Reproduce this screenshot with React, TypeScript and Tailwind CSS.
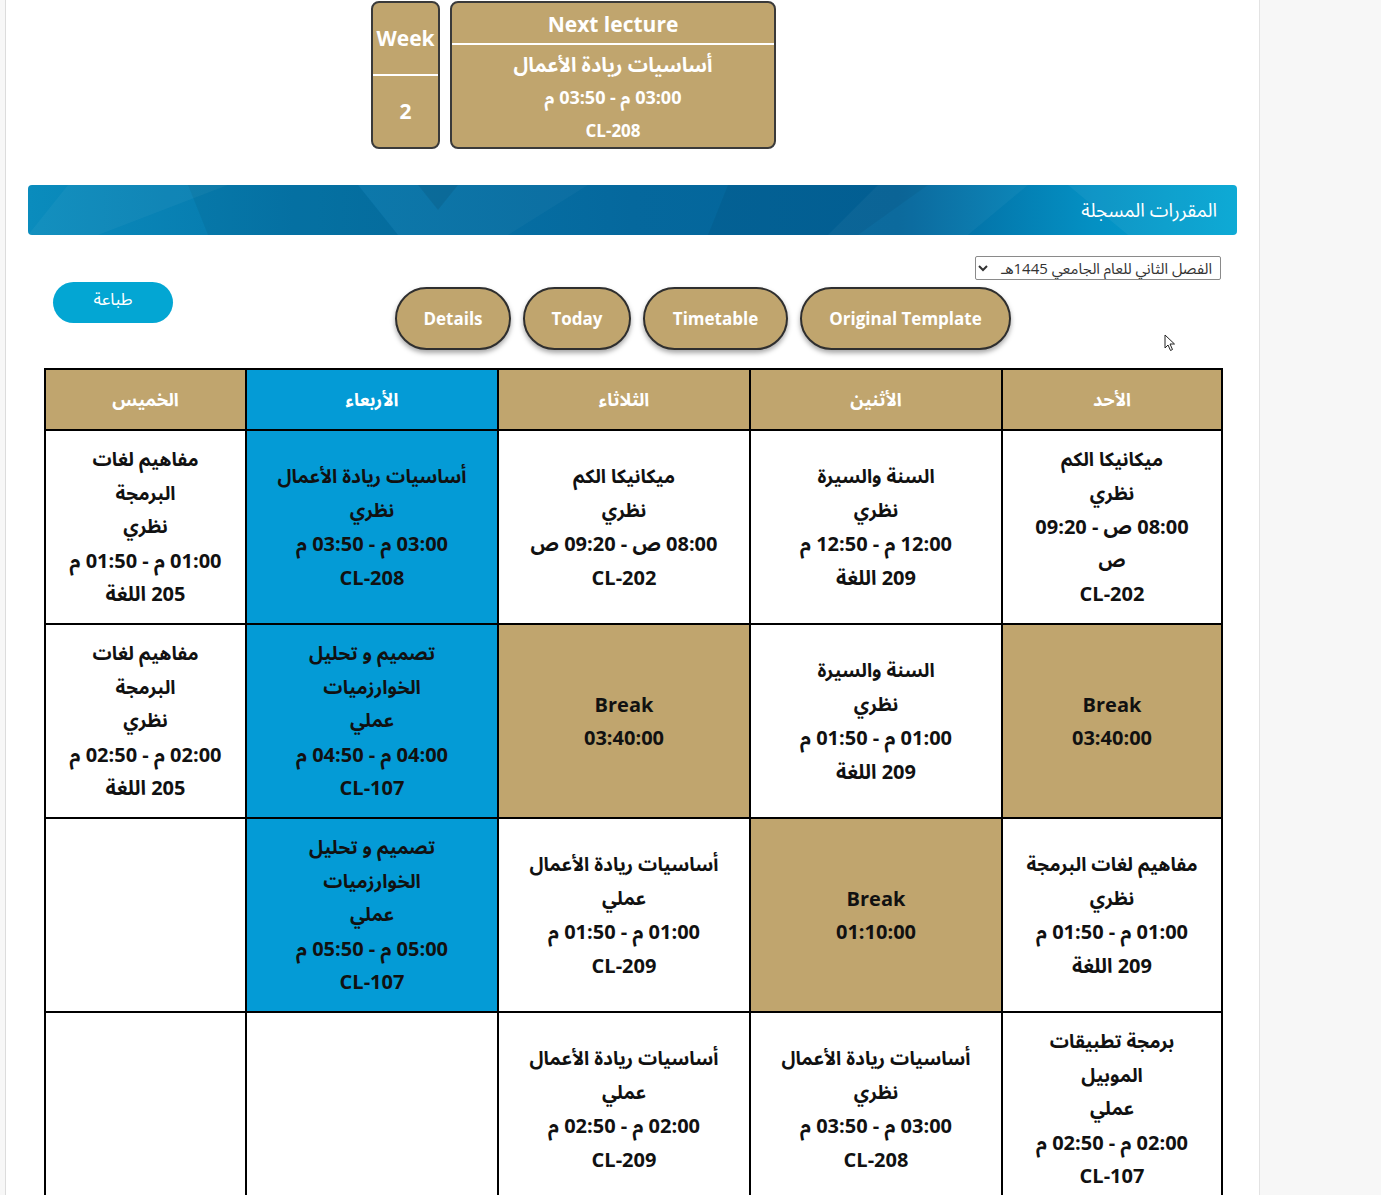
import React from "react";

type Cell =
  | { kind: "course"; lines: string[]; blue?: boolean }
  | { kind: "break"; time: string }
  | { kind: "empty"; blue?: boolean };

const FONT = {
  fontFamily:
    '"Open Sans", "Noto Sans", "Noto Sans Arabic", "Noto Naskh Arabic", "DejaVu Sans", sans-serif',
};

// Columns in RTL order: Sun, Mon, Tue, Wed, Thu
const days = ["الأحد", "الأثنين", "الثلاثاء", "الأربعاء", "الخميس"];
const widths = [220, 252, 252, 252, 201];

const rows: Cell[][] = [
  [
    { kind: "course", lines: ["ميكانيكا الكم", "نظري", "08:00 ص - 09:20", "ص", "CL-202"] },
    { kind: "course", lines: ["السنة والسيرة", "نظري", "12:00 م - 12:50 م", "209 اللغة"] },
    { kind: "course", lines: ["ميكانيكا الكم", "نظري", "08:00 ص - 09:20 ص", "CL-202"] },
    { kind: "course", lines: ["أساسيات ريادة الأعمال", "نظري", "03:00 م - 03:50 م", "CL-208"], blue: true },
    { kind: "course", lines: ["مفاهيم لغات", "البرمجة", "نظري", "01:00 م - 01:50 م", "205 اللغة"] },
  ],
  [
    { kind: "break", time: "03:40:00" },
    { kind: "course", lines: ["السنة والسيرة", "نظري", "01:00 م - 01:50 م", "209 اللغة"] },
    { kind: "break", time: "03:40:00" },
    { kind: "course", lines: ["تصميم و تحليل", "الخوارزميات", "عملي", "04:00 م - 04:50 م", "CL-107"], blue: true },
    { kind: "course", lines: ["مفاهيم لغات", "البرمجة", "نظري", "02:00 م - 02:50 م", "205 اللغة"] },
  ],
  [
    { kind: "course", lines: ["مفاهيم لغات البرمجة", "نظري", "01:00 م - 01:50 م", "209 اللغة"] },
    { kind: "break", time: "01:10:00" },
    { kind: "course", lines: ["أساسيات ريادة الأعمال", "عملي", "01:00 م - 01:50 م", "CL-209"] },
    { kind: "course", lines: ["تصميم و تحليل", "الخوارزميات", "عملي", "05:00 م - 05:50 م", "CL-107"], blue: true },
    { kind: "empty" },
  ],
  [
    { kind: "course", lines: ["برمجة تطبيقات", "الموبيل", "عملي", "02:00 م - 02:50 م", "CL-107"] },
    { kind: "course", lines: ["أساسيات ريادة الأعمال", "نظري", "03:00 م - 03:50 م", "CL-208"] },
    { kind: "course", lines: ["أساسيات ريادة الأعمال", "عملي", "02:00 م - 02:50 م", "CL-209"] },
    { kind: "empty" },
    { kind: "empty" },
  ],
];

const isArabicOnly = (s: string) => !/[0-9A-Za-z]/.test(s);

function TableCell({ cell }: { cell: Cell }) {
  if (cell.kind === "break") {
    return (
      <td className="border-2 border-black bg-[#c0a56e] text-center align-middle">
        <div className="text-[20px] font-bold leading-[33.5px] text-[#111]" dir="ltr">
          <div>Break</div>
          <div>{cell.time}</div>
        </div>
      </td>
    );
  }
  if (cell.kind === "empty") {
    return <td className={"border-2 border-black " + (cell.blue ? "bg-[#049bd6]" : "bg-white")}></td>;
  }
  return (
    <td className={"border-2 border-black text-center align-middle " + (cell.blue ? "bg-[#049bd6]" : "bg-white")}>
      <div className="text-[20px] font-bold leading-[33.5px] text-[#111]">
        {cell.lines.map((l, i) => (
          <div key={i} className={"whitespace-nowrap " + (isArabicOnly(l) ? "text-[19px]" : "")}>
            {l}
          </div>
        ))}
      </div>
    </td>
  );
}

function Banner() {
  return (
    <div className="relative ml-[22px] mt-[36px] h-[50px] w-[1209px] overflow-hidden rounded-[4px] bg-[linear-gradient(90deg,#0a8cbd_0%,#0677ab_22%,#05689d_50%,#03649a_72%,#0490c3_88%,#02a6d3_100%)]">
      <svg className="absolute inset-0 h-full w-full" viewBox="0 0 1209 50" preserveAspectRatio="none">
        <polygon points="40,0 200,0 70,50 0,50" fill="#ffffff" opacity="0.04" />
        <polygon points="160,0 330,0 370,50 180,50" fill="#000000" opacity="0.05" />
        <polygon points="330,0 560,0 480,50 370,50" fill="#ffffff" opacity="0.03" />
        <polygon points="700,0 900,0 830,50 680,50" fill="#000000" opacity="0.05" />
        <polygon points="850,0 1000,0 940,50 800,50" fill="#ffffff" opacity="0.04" />
        <polygon points="1040,0 1209,0 1209,50 1100,50" fill="#ffffff" opacity="0.05" />
        <polygon points="390,0 430,0 410,25" fill="#000000" opacity="0.08" />
      </svg>
      <div className="relative flex h-full items-center justify-start pr-[20px] text-[19px] text-white" dir="rtl">
        المقررات المسجلة
      </div>
    </div>
  );
}

export default function App() {
  return (
    <div className="flex min-h-[1195px] w-[1381px] bg-white" style={FONT}>
      <div className="w-[6px] shrink-0 border-r border-[#dcdcdc] bg-[#f7f7f7]"></div>
      <div className="relative w-[1253px] shrink-0 overflow-hidden">
        {/* Top cards */}
        <div className="ml-[365px] mt-px flex gap-[10px]">
          <div className="flex h-[148px] w-[69px] flex-col overflow-hidden rounded-[8px] border-2 border-[#3a3a3a] bg-[#c0a56e] text-white">
            <div className="flex h-[73px] items-center justify-center border-b-2 border-white text-[21px] font-bold">Week</div>
            <div className="flex flex-1 items-center justify-center text-[21px] font-bold">2</div>
          </div>
          <div className="flex h-[148px] w-[326px] flex-col overflow-hidden rounded-[8px] border-2 border-[#3a3a3a] bg-[#c0a56e] text-white">
            <div className="flex h-[45px] items-center justify-center border-b-2 border-white pt-[3px] text-[21px] font-bold">Next lecture</div>
            <div className="flex flex-col items-center pt-[3px] text-[18px] font-bold leading-[33px]" dir="rtl">
              <div className="text-[20px]">أساسيات ريادة الأعمال</div>
              <div>03:00 م - 03:50 م</div>
              <div className="text-[17px]">CL-208</div>
            </div>
          </div>
        </div>

        <Banner />

        <div className="mr-[38px] mt-[21px] flex justify-end">
          <select
            dir="rtl"
            className="h-[24px] w-[246px] rounded-[2px] border border-[#8a8a8a] bg-white px-1 text-[15px] text-[#333]"
            defaultValue="a"
          >
            <option value="a">الفصل الثاني للعام الجامعي 1445هـ</option>
          </select>
        </div>

        <div className="mt-[2px] flex items-start">
          <button className="ml-[47px] flex h-[41px] w-[120px] items-center justify-center rounded-full bg-[#03a6d3] pb-[8px] text-[17px] text-white" dir="rtl">
            طباعة
          </button>
          <div className="ml-[222px] mt-[5px] flex gap-[12px]">
            {[
              ["Details", "w-[116px]"],
              ["Today", "w-[108px]"],
              ["Timetable", "w-[145px]"],
              ["Original Template", "w-[211px]"],
            ].map(([t, w]) => (
              <div
                key={t}
                className={
                  "flex h-[63px] items-center justify-center rounded-full border-2 border-[#2f2f2f] bg-[#c0a56e] text-[17px] font-bold text-white shadow-[0_3px_5px_rgba(0,0,0,0.35)] " +
                  w
                }
              >
                {t}
              </div>
            ))}
          </div>
        </div>

        {/* cursor */}
        <svg className="absolute left-[1158px] top-[334px]" width="12" height="18" viewBox="0 0 12 18">
          <path d="M1 1 L1 14 L4 11 L6.5 16.5 L8.5 15.5 L6 10 L10.5 10 Z" fill="#fff" stroke="#222" strokeWidth="1" strokeLinejoin="round" />
        </svg>

        <div className="ml-[38px] mt-[18px]">
          <table dir="rtl" className="table-fixed border-collapse border-2 border-black" style={{ width: 1177 }}>
            <colgroup>
              {widths.map((w, i) => (
                <col key={i} style={{ width: w }} />
              ))}
            </colgroup>
            <thead>
              <tr className="h-[61px]">
                {days.map((d, i) => (
                  <th
                    key={d}
                    className={
                      "border-2 border-black text-center text-[18px] font-bold text-white " +
                      (i === 3 ? "bg-[#049bd6]" : "bg-[#c0a56e]")
                    }
                  >
                    {d}
                  </th>
                ))}
              </tr>
            </thead>
            <tbody>
              {rows.map((r, ri) => (
                <tr key={ri} className="h-[194px]">
                  {r.map((c, ci) => (
                    <TableCell key={ci} cell={c} />
                  ))}
                </tr>
              ))}
            </tbody>
          </table>
        </div>
      </div>
      <div className="flex-1 border-l border-[#e3e3e3] bg-[#f7f7f7]"></div>
    </div>
  );
}
